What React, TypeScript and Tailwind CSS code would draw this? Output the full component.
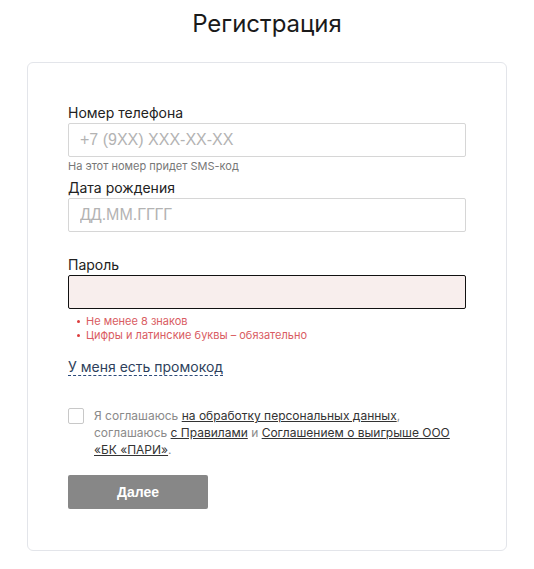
import React, { useState } from 'react';

const RegistrationPage: React.FC = () => {
  const [agree, setAgree] = useState<boolean>(false);

  return (
    <div className="min-h-[569px] bg-white font-['Inter',sans-serif] text-[#222]">
      <h1 className="pt-[9px] text-center text-[24px] leading-[30px] font-normal text-[#1a1a1a]">Регистрация</h1>

      <div className="mx-auto mt-[23px] w-[480px] rounded-[6px] border border-[#e3e5ea] px-10 pt-[41px] pb-[41px]">
        <label className="block text-[14px] leading-[17px] text-[#222]">Номер телефона</label>
        <input
          placeholder="+7 (9XX) XXX-XX-XX"
          className="mt-[2px] block h-[34px] w-full rounded-[2px] border border-[#d6d6d6] px-[11px] font-['Liberation_Sans',sans-serif] text-[16px] placeholder:text-[#b3b3b3] outline-none"
        />
        <div className="mt-[3px] text-[11px] leading-[13px] text-[#777]">На этот номер придет SMS-код</div>

        <label className="mt-[6px] block text-[14px] leading-[17px] text-[#222]">Дата рождения</label>
        <input
          placeholder="ДД.ММ.ГГГГ"
          className="mt-[2px] block h-[34px] w-full rounded-[2px] border border-[#d6d6d6] px-[11px] font-['Liberation_Sans',sans-serif] text-[16px] placeholder:text-[#b3b3b3] outline-none"
        />

        <label className="mt-[24px] block text-[14px] leading-[17px] text-[#222]">Пароль</label>
        <input
          type="password"
          className="mt-[2px] block h-[34px] w-full rounded-[2px] border border-[#111] bg-[#f8eeed] px-[11px] outline-none"
        />
        <ul className="mt-[5px] text-[11px] leading-[14px] text-[#d95c62]">
          <li className="flex items-center">
            <span className="ml-[9px] mr-[6px] inline-block h-[3px] w-[3px] rounded-full bg-[#dc3c3c]" />
            Не менее 8 знаков
          </li>
          <li className="flex items-center">
            <span className="ml-[9px] mr-[6px] inline-block h-[3px] w-[3px] rounded-full bg-[#dc3c3c]" />
            Цифры и латинские буквы – обязательно
          </li>
        </ul>

        <div className="mt-[12px]">
          <span className="border-b border-dashed border-[#2b4a7a] text-[14px] leading-[17px] text-[#2e3f5c]">У меня есть промокод</span>
        </div>

        <div className="mt-[29px] flex items-start">
          <button
            onClick={() => setAgree(!agree)}
            className="mt-[1px] h-[16px] w-[16px] shrink-0 rounded-[2px] border border-[#c8c8c8] bg-white"
          />
          <p className="ml-[10px] text-[12px] leading-[17px] text-[#8a8a8a]">
            Я соглашаюсь <span className="text-[#333] underline">на обработку персональных данных</span>,
            <br />
            соглашаюсь <span className="text-[#333] underline">с Правилами</span> и{' '}
            <span className="text-[#333] underline">Соглашением о выигрыше ООО</span>
            <br />
            <span className="text-[#333] underline">«БК «ПАРИ»</span>.
          </p>
        </div>

        <button className="mt-[17px] h-[34px] w-[140px] rounded-[2px] bg-[#878787] font-['Liberation_Sans',sans-serif] text-[14px] font-bold text-white">
          Далее
        </button>
      </div>
    </div>
  );
};

export default RegistrationPage;
